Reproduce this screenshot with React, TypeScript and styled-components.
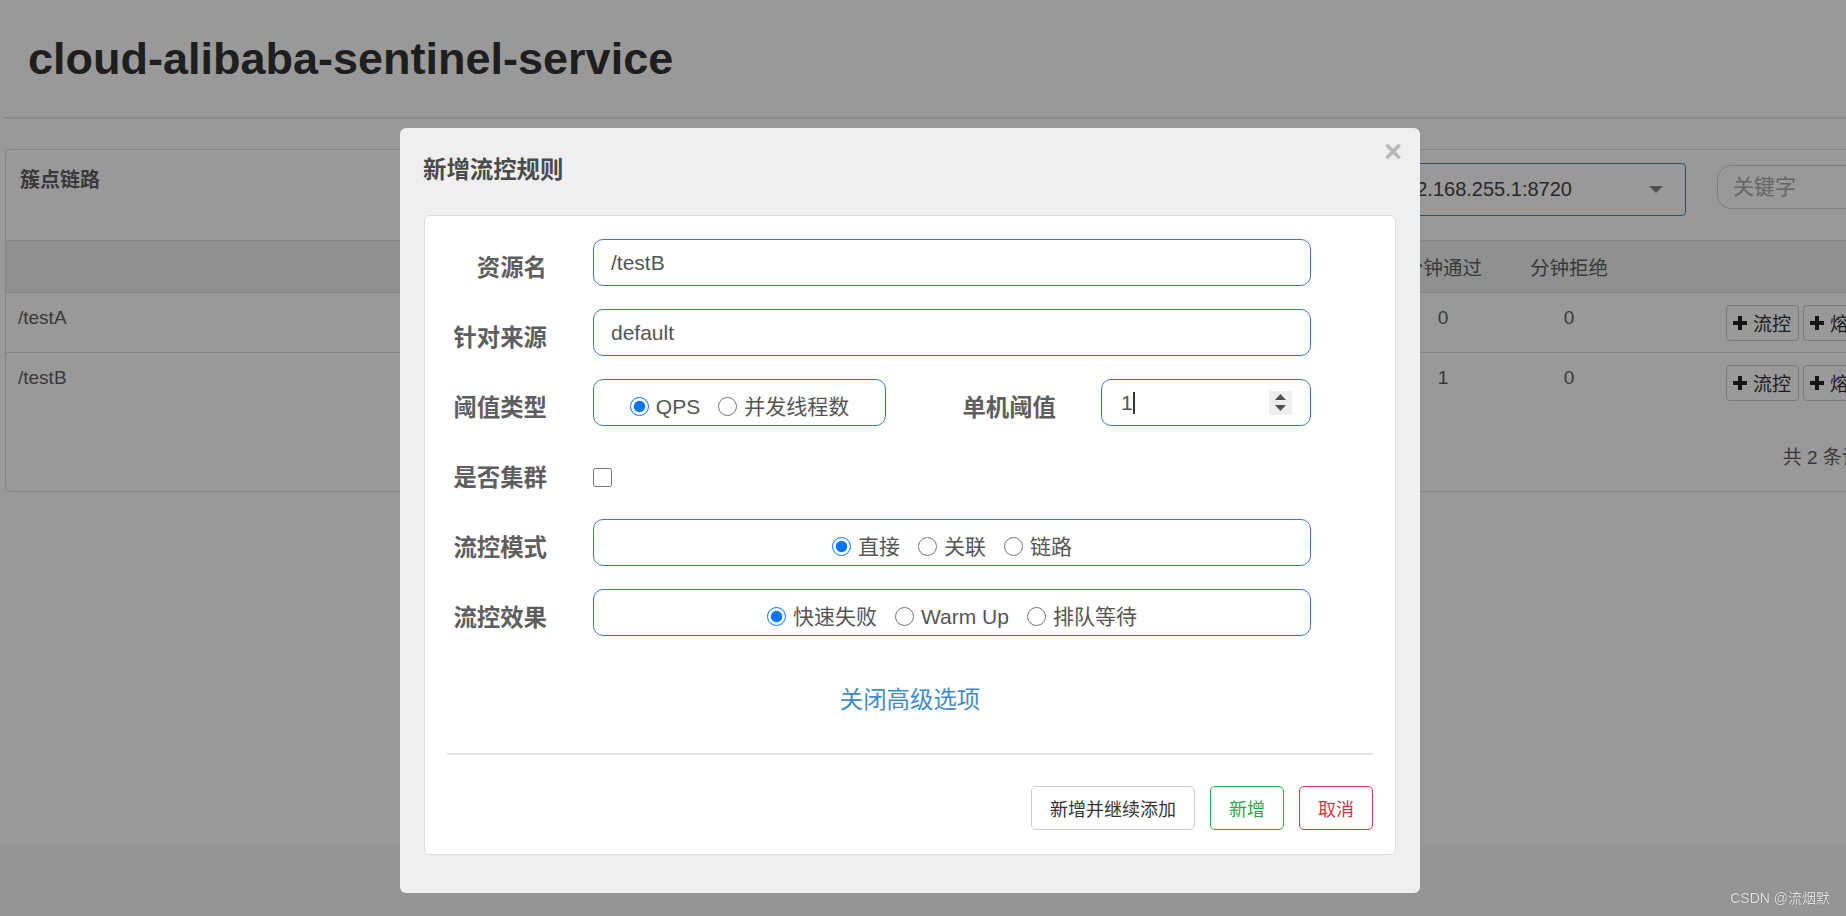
import styled, { createGlobalStyle } from "styled-components";

const latin = `"Liberation Sans", "Noto Sans CJK SC", sans-serif`;
const cjk = `"Noto Sans CJK SC", "Liberation Sans", sans-serif`;

const GlobalStyle = createGlobalStyle`
  html, body {
    margin: 0;
    padding: 0;
  }
  body {
    background: #f8f8f8;
    font-family: ${latin};
    overflow: hidden;
  }
  * {
    box-sizing: border-box;
  }
`;

/* ---------- page behind the dialog ---------- */

const Page = styled.div`
  min-height: 846px;
  background: #fff;
  padding-left: 4px;
  overflow: hidden;
`;

const Header = styled.header`
  height: 119px;
  padding: 34px 0 0 24px;
  border-bottom: 2px solid #e8e8e8;
`;

const Title = styled.h1`
  margin: 0;
  font-family: "Liberation Sans", sans-serif;
  font-size: 45px;
  line-height: 49.5px;
  font-weight: 700;
  color: #333;
`;

const Panel = styled.section`
  width: 1968px;
  margin: 30px 0 0 1px;
  border: 1px solid #ddd;
  border-radius: 6px;
  overflow: hidden;
`;

const PanelHeading = styled.div`
  display: flex;
  align-items: flex-start;
  height: 91px;
  padding: 13px 14px 0;
  border-bottom: 1px solid #ddd;
`;

const PanelTitle = styled.h3`
  margin: 2px 0 0;
  font-family: ${cjk};
  font-size: 20px;
  line-height: 28px;
  font-weight: 700;
  color: #5f5f5f;
`;

const MachineSelect = styled.div`
  display: flex;
  align-items: center;
  margin-left: auto;
  width: 300px;
  height: 53px;
  padding: 0 22px 0 7px;
  border: 1px solid #4a86c0;
  border-radius: 4px;
  font-size: 20px;
  color: #444;

  svg {
    margin-left: auto;
  }
`;

const SearchInput = styled.input`
  width: 241px;
  height: 44px;
  margin: 2px 0 0 31px;
  padding: 0 15px;
  border: 1px solid #d0d0d0;
  border-radius: 14px;
  font-family: ${latin};
  font-size: 21px;
  outline: none;

  &::placeholder {
    color: #aaa;
  }
`;

const Table = styled.table`
  width: 100%;
  border-collapse: collapse;
  table-layout: fixed;
  font-size: 19px;
  color: #5f5f5f;
`;

const Th = styled.th`
  height: 51px;
  padding: 0 12px;
  background: #eef0f1;
  border-bottom: 1px solid #ddd;
  font-weight: 400;
  font-size: 19.5px;
  text-align: center;
  vertical-align: middle;
  white-space: nowrap;
`;

const Td = styled.td<{ $align?: string; $last?: boolean }>`
  padding: 11px 12px;
  line-height: 27px;
  vertical-align: top;
  text-align: ${(p) => p.$align || "center"};
  border-bottom: ${(p) => (p.$last ? "none" : "1px solid #ddd")};
  white-space: nowrap;
`;

const OpsCell = styled(Td)`
  padding-left: 94px;
  text-align: left;
`;

const OpButton = styled.button`
  display: inline-flex;
  align-items: center;
  gap: 6px;
  height: 36px;
  margin: 1px 4px 0 0;
  padding: 0 7px 0 6px;
  border: 1px solid #ccc;
  border-radius: 4px;
  background: #fff;
  font-family: ${cjk};
  font-size: 19px;
  color: #333;
  vertical-align: top;
`;

const PanelFooter = styled.div`
  display: flex;
  justify-content: flex-end;
  padding: 32px 14px 20px;
  line-height: 27px;
  font-size: 19px;
  color: #5f5f5f;
`;

/* ---------- dialog ---------- */

const Backdrop = styled.div`
  position: fixed;
  inset: 0;
  background: rgba(0, 0, 0, 0.4);
  z-index: 10;
`;

const Dialog = styled.div`
  position: fixed;
  top: 128px;
  left: 400px;
  width: 1020px;
  background: #f0f0f0;
  border-radius: 6px;
  z-index: 11;
`;

const DialogHeader = styled.div`
  display: flex;
  justify-content: space-between;
  align-items: flex-start;
  padding: 24px 18px 31px 23px;
`;

const DialogTitle = styled.h4`
  margin: 0;
  font-family: ${cjk};
  font-size: 23.4px;
  line-height: 32px;
  font-weight: 700;
  color: #4a4a4a;
`;

const CloseButton = styled.button`
  margin-top: -16px;
  padding: 0;
  border: none;
  background: none;
  font-family: "Liberation Sans", sans-serif;
  font-size: 31px;
  line-height: 1;
  font-weight: 700;
  color: #b8b8b8;
`;

const DialogBody = styled.div`
  padding: 0 24px 38px;
`;

const Card = styled.div`
  background: #fff;
  border: 1px solid #ddd;
  border-radius: 6px;
  padding: 23px 22px 24px;
`;

const Form = styled.div`
  display: grid;
  row-gap: 23px;
`;

const FormRow = styled.div`
  display: grid;
  grid-template-columns: 100px 718px;
  column-gap: 46px;
  align-items: start;
  min-height: 47px;
`;

const Label = styled.label`
  padding-top: 11px;
  font-family: ${cjk};
  font-size: 23.4px;
  line-height: 32px;
  font-weight: 700;
  color: #5e5e5e;
  text-align: right;
  white-space: nowrap;
`;

const TextInput = styled.input`
  width: 100%;
  height: 47px;
  padding: 0 17px;
  border: 1px solid #3c7bc0;
  border-radius: 10px;
  font-family: ${latin};
  font-size: 21px;
  color: #555;
  outline: none;
`;

const SplitField = styled.div`
  display: grid;
  grid-template-columns: 293px 1fr 210px;
  column-gap: 45px;
  align-items: start;
`;

const RadioBox = styled.div`
  display: flex;
  justify-content: center;
  align-items: center;
  height: 47px;
  padding-top: 8px;
  border: 1px solid #3c7bc0;
  border-radius: 10px;
`;

const Option = styled.label`
  display: inline-flex;
  align-items: center;
  gap: 7px;
  margin: 0 9px;
  font-family: ${latin};
  font-size: 21px;
  line-height: 24px;
  color: #555;
  white-space: nowrap;
`;

const Radio = styled.input.attrs({ type: "radio" })`
  width: 19px;
  height: 19px;
  margin: 0;
`;

const Checkbox = styled.input.attrs({ type: "checkbox" })`
  width: 19px;
  height: 19px;
  margin: 19px 0 0;
`;

const NumberField = styled.div`
  display: flex;
  align-items: center;
  height: 47px;
  padding: 0 18px 0 19px;
  border: 1px solid #3c7bc0;
  border-radius: 10px;
  font-family: ${latin};
  font-size: 21px;
  color: #555;
`;

const Caret = styled.span`
  width: 2px;
  height: 22px;
  background: #333;
`;

const Spinner = styled.div`
  display: flex;
  flex-direction: column;
  align-items: center;
  justify-content: center;
  gap: 5px;
  width: 23px;
  height: 24px;
  margin-left: auto;
  background: #efefef;
`;

const LinkRow = styled.div`
  margin-top: 46px;
  text-align: center;
  line-height: 32px;
`;

const Link = styled.a`
  font-family: ${cjk};
  font-size: 23.4px;
  color: #428bca;
  text-decoration: none;
`;

const Divider = styled.div`
  height: 2px;
  margin-top: 34px;
  background: #e5e5e5;
`;

const Actions = styled.div`
  display: flex;
  justify-content: flex-end;
  gap: 15px;
  margin-top: 31px;
`;

const tones = {
  default: { border: "#ccc", color: "#333" },
  success: { border: "#28a745", color: "#28a745" },
  danger: { border: "#dc3545", color: "#dc3545" },
};

const Button = styled.button<{ $tone: keyof typeof tones }>`
  display: inline-flex;
  align-items: center;
  height: 44px;
  padding: 0 18px;
  border: 1px solid ${(p) => tones[p.$tone].border};
  border-radius: 5px;
  background: #fff;
  font-family: ${cjk};
  font-size: 18px;
  color: ${(p) => tones[p.$tone].color};
`;

const Watermark = styled.div`
  position: fixed;
  right: 16px;
  bottom: 9px;
  z-index: 20;
  font-family: ${latin};
  font-size: 14px;
  color: rgba(255, 255, 255, 0.85);
  text-shadow: 0 0 1px rgba(0, 0, 0, 0.6);
`;

function Plus() {
  return (
    <svg width="14" height="14" viewBox="0 0 14 14">
      <path d="M5 0h4v5h5v4H9v5H5V9H0V5h5z" fill="#222" />
    </svg>
  );
}

const rows = [
  { name: "/testA", pass: 0, block: 0 },
  { name: "/testB", pass: 1, block: 0 },
];

function App() {
  return (
    <>
      <GlobalStyle />
      <Page>
        <Header>
          <Title>cloud-alibaba-sentinel-service</Title>
        </Header>
        <Panel>
          <PanelHeading>
            <PanelTitle>簇点链路</PanelTitle>
            <MachineSelect>
              <span>192.168.255.1:8720</span>
              <svg width="14" height="7" viewBox="0 0 14 7">
                <path d="M0 0H14L7 7Z" fill="#888" />
              </svg>
            </MachineSelect>
            <SearchInput placeholder="关键字" />
          </PanelHeading>
          <Table>
            <colgroup>
              <col style={{ width: 860 }} />
              <col style={{ width: 134 }} />
              <col style={{ width: 130 }} />
              <col style={{ width: 120 }} />
              <col style={{ width: 130 }} />
              <col style={{ width: 126 }} />
              <col style={{ width: 126 }} />
              <col />
            </colgroup>
            <thead>
              <tr>
                <Th>资源名</Th>
                <Th>通过QPS</Th>
                <Th>拒绝QPS</Th>
                <Th>并发数</Th>
                <Th>平均RT</Th>
                <Th>分钟通过</Th>
                <Th>分钟拒绝</Th>
                <Th />
              </tr>
            </thead>
            <tbody>
              {rows.map((r, i) => {
                const last = i === rows.length - 1;
                return (
                  <tr key={r.name}>
                    <Td $align="left" $last={last}>
                      {r.name}
                    </Td>
                    <Td $last={last}>0</Td>
                    <Td $last={last}>0</Td>
                    <Td $last={last}>0</Td>
                    <Td $last={last}>0</Td>
                    <Td $last={last}>{r.pass}</Td>
                    <Td $last={last}>{r.block}</Td>
                    <OpsCell $last={last}>
                      <OpButton>
                        <Plus />
                        流控
                      </OpButton>
                      <OpButton>
                        <Plus />
                        熔断
                      </OpButton>
                    </OpsCell>
                  </tr>
                );
              })}
            </tbody>
          </Table>
          <PanelFooter>共 2 条记录，共 1 页</PanelFooter>
        </Panel>
      </Page>

      <Backdrop />
      <Dialog>
        <DialogHeader>
          <DialogTitle>新增流控规则</DialogTitle>
          <CloseButton>×</CloseButton>
        </DialogHeader>
        <DialogBody>
          <Card>
            <Form>
              <FormRow>
                <Label>资源名</Label>
                <TextInput defaultValue="/testB" />
              </FormRow>
              <FormRow>
                <Label>针对来源</Label>
                <TextInput defaultValue="default" />
              </FormRow>
              <FormRow>
                <Label>阈值类型</Label>
                <SplitField>
                  <RadioBox>
                    <Option>
                      <Radio name="grade" defaultChecked />
                      QPS
                    </Option>
                    <Option>
                      <Radio name="grade" />
                      并发线程数
                    </Option>
                  </RadioBox>
                  <Label>单机阈值</Label>
                  <NumberField>
                    <span>1</span>
                    <Caret />
                    <Spinner>
                      <svg width="11" height="6" viewBox="0 0 11 6">
                        <path d="M0 6L5.5 0L11 6Z" fill="#505050" />
                      </svg>
                      <svg width="11" height="6" viewBox="0 0 11 6">
                        <path d="M0 0H11L5.5 6Z" fill="#505050" />
                      </svg>
                    </Spinner>
                  </NumberField>
                </SplitField>
              </FormRow>
              <FormRow>
                <Label>是否集群</Label>
                <div>
                  <Checkbox />
                </div>
              </FormRow>
              <FormRow>
                <Label>流控模式</Label>
                <RadioBox>
                  <Option>
                    <Radio name="strategy" defaultChecked />
                    直接
                  </Option>
                  <Option>
                    <Radio name="strategy" />
                    关联
                  </Option>
                  <Option>
                    <Radio name="strategy" />
                    链路
                  </Option>
                </RadioBox>
              </FormRow>
              <FormRow>
                <Label>流控效果</Label>
                <RadioBox>
                  <Option>
                    <Radio name="behavior" defaultChecked />
                    快速失败
                  </Option>
                  <Option>
                    <Radio name="behavior" />
                    Warm Up
                  </Option>
                  <Option>
                    <Radio name="behavior" />
                    排队等待
                  </Option>
                </RadioBox>
              </FormRow>
            </Form>
            <LinkRow>
              <Link href="#">关闭高级选项</Link>
            </LinkRow>
            <Divider />
            <Actions>
              <Button $tone="default">新增并继续添加</Button>
              <Button $tone="success">新增</Button>
              <Button $tone="danger">取消</Button>
            </Actions>
          </Card>
        </DialogBody>
      </Dialog>
      <Watermark>CSDN @流烟默</Watermark>
    </>
  );
}

export default App;
